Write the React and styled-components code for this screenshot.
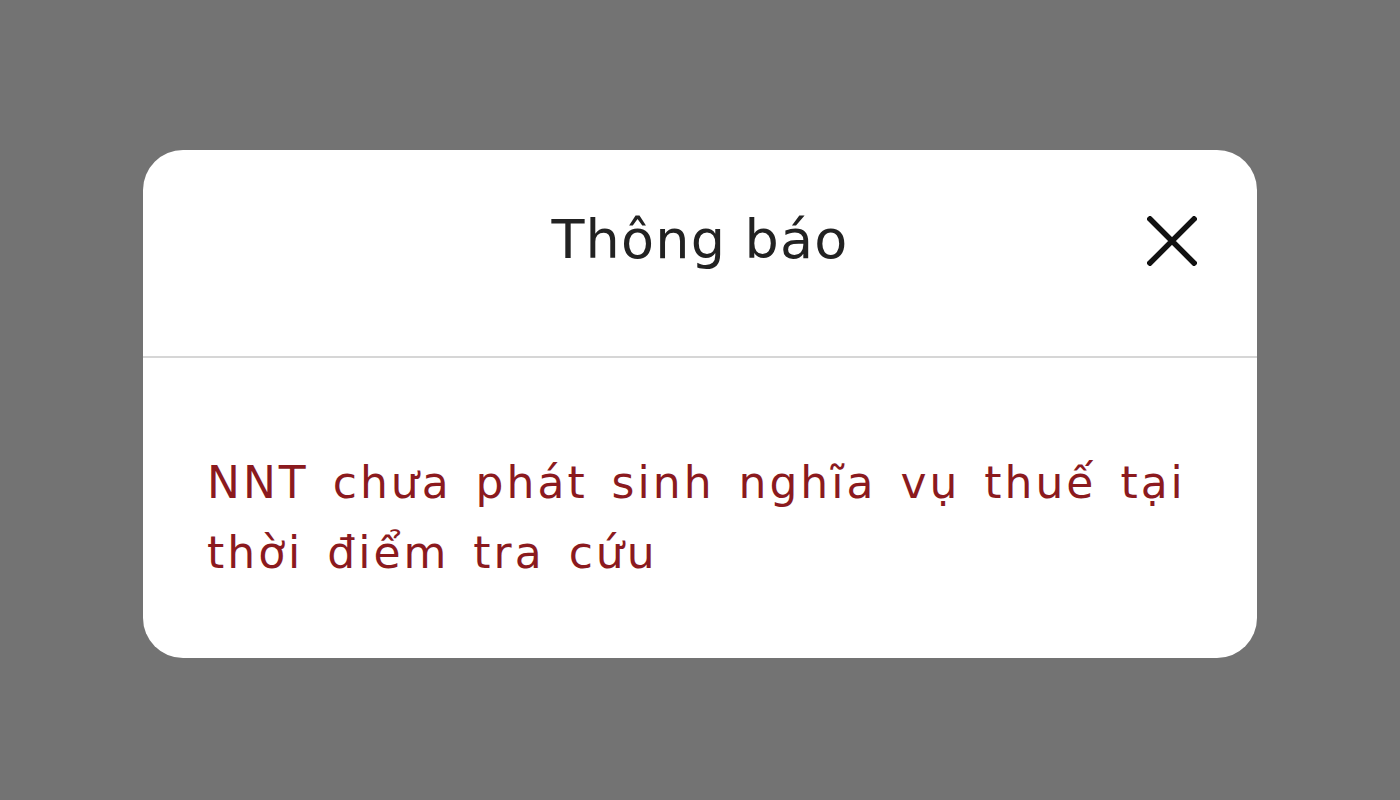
import React from 'react';
import styled, { createGlobalStyle } from 'styled-components';

const GlobalStyle = createGlobalStyle`
  html, body {
    margin: 0;
    padding: 0;
  }
  body {
    background: #737373;
    font-family: "DejaVu Sans", "Noto Sans", sans-serif;
  }
`;

const Backdrop = styled.div`
  width: 100vw;
  height: 100vh;
  box-sizing: border-box;
  padding-top: 8px;
  display: flex;
  align-items: center;
  justify-content: center;
`;

const Dialog = styled.div`
  width: 1114px;
  height: 508px;
  background: #ffffff;
  border-radius: 40px;
  display: flex;
  flex-direction: column;
  overflow: hidden;
`;

const Header = styled.div`
  height: 208px;
  box-sizing: border-box;
  padding: 57px 60px 0;
  display: grid;
  grid-template-columns: 60px 1fr 60px;
  align-items: start;
  border-bottom: 2px solid #d6d6d6;
`;

const Title = styled.h2`
  grid-column: 2;
  margin: 0;
  text-align: center;
  font-size: 54px;
  line-height: 66px;
  font-weight: 400;
  color: #222222;
  letter-spacing: 1.2px;
`;

const CloseButton = styled.button`
  grid-column: 3;
  justify-self: end;
  margin-top: 9px;
  width: 50px;
  height: 50px;
  padding: 0;
  border: 0;
  background: transparent;
  cursor: pointer;
  display: flex;
  align-items: center;
  justify-content: center;
`;

const Body = styled.div`
  padding: 90px 56px 0 64px;
`;

const Message = styled.p`
  margin: 0;
  font-size: 44px;
  line-height: 70px;
  color: #8b1a1e;
  letter-spacing: 3px;
  word-spacing: 7px;
`;

const CloseIcon = () => (
  <svg width="50" height="50" viewBox="0 0 50 50" fill="none">
    <path d="M3 3 L47 47 M47 3 L3 47" stroke="#111" strokeWidth="5.5" strokeLinecap="square" />
  </svg>
);

export default function App() {
  return (
    <>
      <GlobalStyle />
      <Backdrop>
        <Dialog>
          <Header>
            <Title>Thông báo</Title>
            <CloseButton aria-label="Đóng">
              <CloseIcon />
            </CloseButton>
          </Header>
          <Body>
            <Message>NNT chưa phát sinh nghĩa vụ thuế tại thời điểm tra cứu</Message>
          </Body>
        </Dialog>
      </Backdrop>
    </>
  );
}
